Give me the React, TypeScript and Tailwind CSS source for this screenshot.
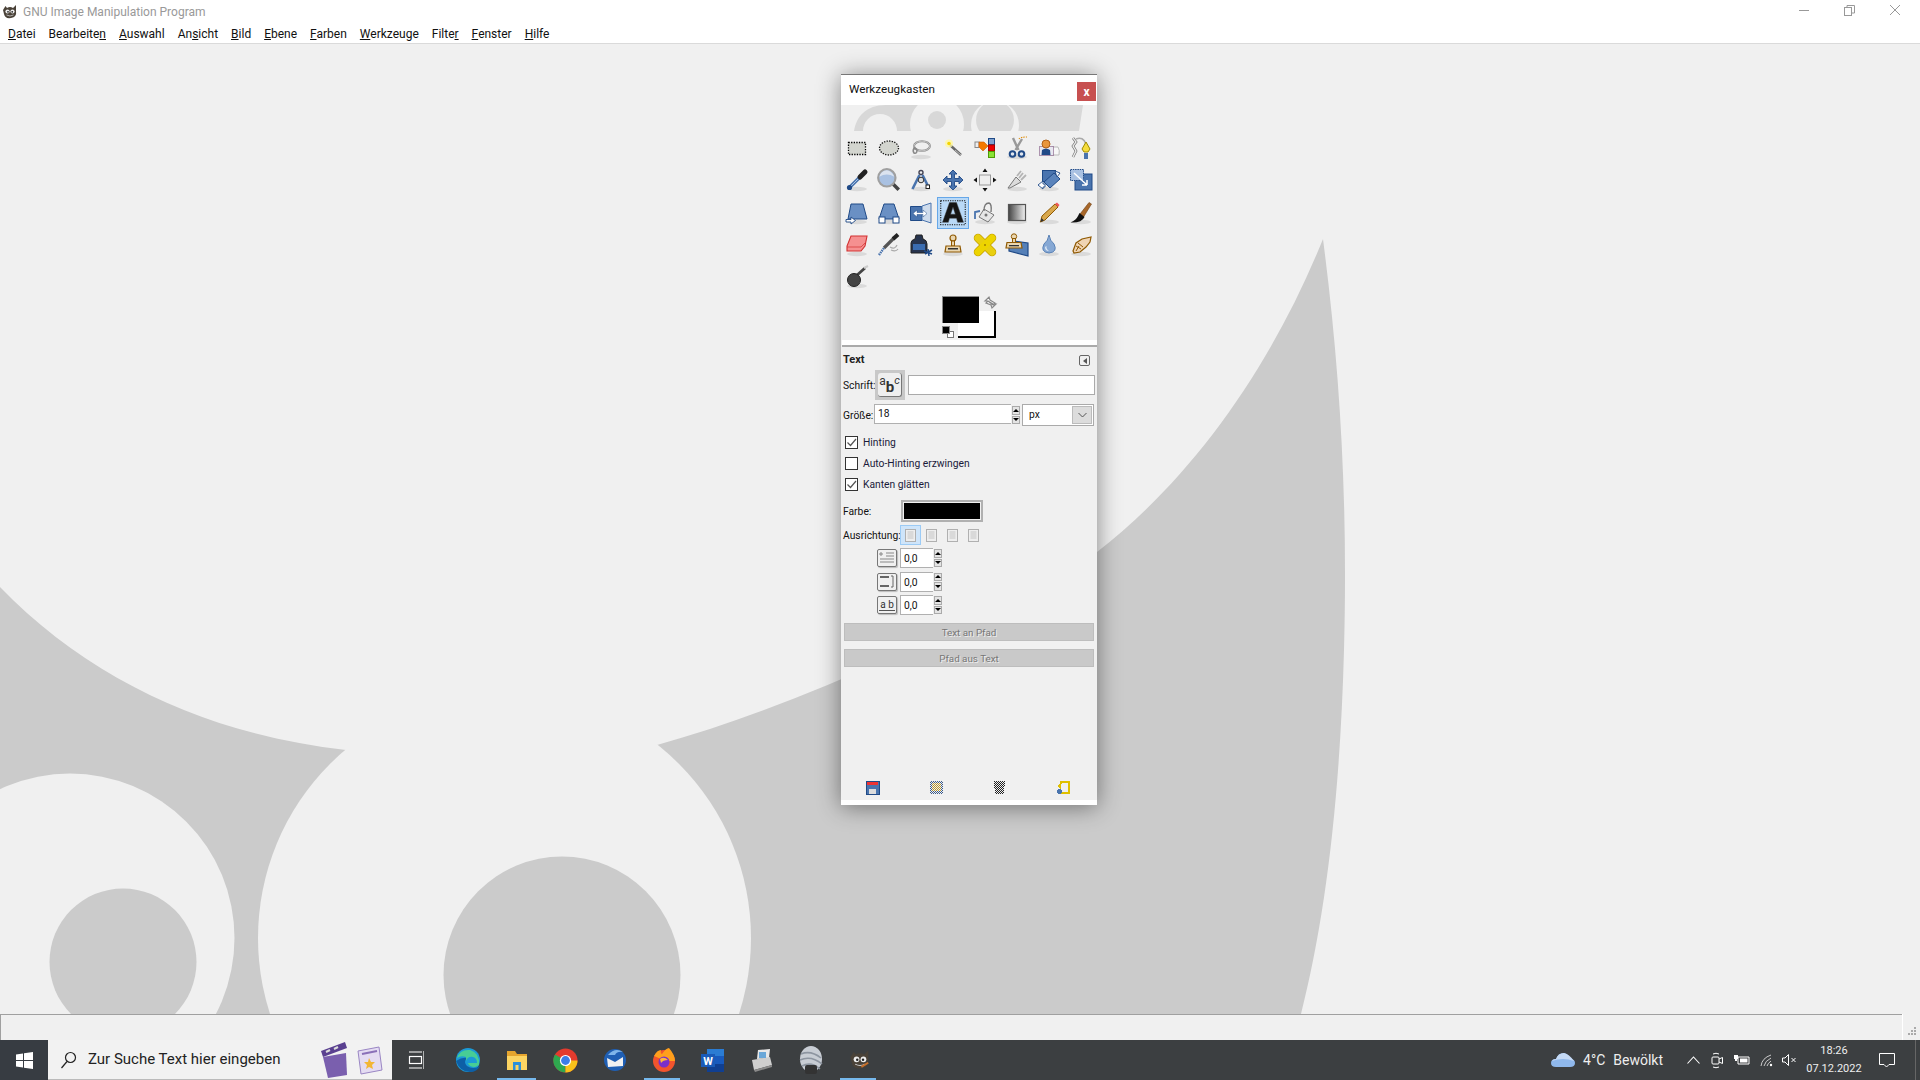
import type { ReactNode } from "react";

const menus: [string, string, string][] = [
    ["", "D", "atei"],
    ["Bearbeite", "n", ""],
    ["", "A", "uswahl"],
    ["An", "s", "icht"],
    ["", "B", "ild"],
    ["", "E", "bene"],
    ["", "F", "arben"],
    ["", "W", "erkzeuge"],
    ["Filte", "r", ""],
    ["", "F", "enster"],
    ["", "H", "ilfe"],
];

const Ico = ({ children, size = 24 }: { children: ReactNode; size?: number }) => (
    <svg width={size} height={size} viewBox="0 0 24 24" fill="none">
        {children}
    </svg>
);

const Shadow = () => <ellipse cx="12" cy="21" rx="10" ry="2.2" fill="#000" opacity="0.09" />;

const Wilber = ({ size = 16, brush }: { size?: number; brush?: boolean }) => (
    <svg width={size} height={size} viewBox="0 0 16 16">
        <path d="M1 6 L3.5 2 L5 4 Q8 2 11 4 L14 1 L14 7 Q15 13 9 14 Q3 15 2 10 Z" fill="#4a4238" />
        <circle cx="5.5" cy="7.5" r="2.1" fill="#eee" />
        <circle cx="10.5" cy="7.5" r="2.1" fill="#eee" />
        <circle cx="6" cy="7.8" r="0.9" fill="#222" />
        <circle cx="10.2" cy="7.8" r="0.9" fill="#222" />
        <path d="M4.5 11 Q8 13 11.5 11" stroke="#ccc" strokeWidth="0.8" fill="none" />
        {brush && <path d="M9 13 L14 10" stroke="#c8702a" strokeWidth="1.4" />}
    </svg>
);

const blue = "#4a74ae";
const dark = "#204a87";

const toolIcons: ReactNode[] = [
    <Ico key="rect">
        <rect x="3.5" y="6.5" width="17" height="12" fill="#d3d5cf" stroke="#000" strokeWidth="1.3" strokeDasharray="1.3 1.3" />
    </Ico>,
    <Ico key="ell">
        <ellipse cx="12" cy="12" rx="9.5" ry="7" fill="#d3d5cf" stroke="#111" strokeWidth="1.3" strokeDasharray="1.3 1.3" />
    </Ico>,
    <Ico key="lasso">
        <Shadow />
        <ellipse cx="13" cy="10" rx="8" ry="4.8" stroke="#8a8a8a" strokeWidth="2" />
        <ellipse cx="13" cy="10" rx="8" ry="4.8" stroke="#e6e6e6" strokeWidth="0.6" />
        <path d="M6 11 Q3 14 5 17 Q8 18 8 14 Q7 12 5 13" stroke="#8a8a8a" strokeWidth="1.6" />
    </Ico>,
    <Ico key="wand">
        <path d="M9 9 L20 19" stroke="#666" strokeWidth="2.4" />
        <path d="M14 14 L20 19" stroke="#bbb" strokeWidth="1" />
        <circle cx="8" cy="7.5" r="4" fill="#fff7a0" opacity="0.8" />
        <circle cx="8" cy="7.5" r="1.8" fill="#f4d400" />
    </Ico>,
    <Ico key="bycolor">
        <rect x="15.5" y="2.5" width="6" height="6" fill="#7ea1cf" stroke={dark} />
        <rect x="15.5" y="9" width="6" height="6" fill="#e00" stroke="#a00" />
        <rect x="15.5" y="15.5" width="6" height="6" fill="#8ae234" stroke="#4e9a06" />
        <rect x="2" y="6" width="4" height="5.5" fill="#eee" stroke="#888" />
        <path d="M6 6 L11 6 L15 10 L10 15 L6 11 Z" fill="#f57900" stroke="#ce5c00" strokeWidth="0.6" />
    </Ico>,
    <Ico key="scissors">
        <Shadow />
        <path d="M8 2 L13.5 14 M17 3 L10.5 14" stroke="#999" strokeWidth="2.4" />
        <circle cx="7.5" cy="18" r="2.8" stroke={dark} strokeWidth="2" fill="#dfe6ef" />
        <circle cx="16.5" cy="18" r="2.8" stroke={dark} strokeWidth="2" fill="#dfe6ef" />
        <path d="M14 3 Q15 1 22 1" stroke="#e08a00" strokeWidth="1.1" strokeDasharray="1.5 1" />
    </Ico>,
    <Ico key="fgsel">
        <path d="M15 11 L21 11 Q23 14 22 19 L12 19" stroke="#bbb" fill="#f7f7f7" />
        <rect x="2.5" y="10.5" width="14" height="9" fill="#e8e8f0" stroke="#6c3a6c" strokeDasharray="1 1" />
        <path d="M4.5 19 L5 14 Q9 11 13 14 L13.5 19 Z" fill={dark} />
        <circle cx="9" cy="8" r="4" fill="#e8963c" stroke="#b06018" />
    </Ico>,
    <Ico key="paths">
        <path d="M4 2 L7 6 L4 10 L7 15 L4 21" stroke="#777" strokeWidth="2.6" />
        <path d="M4 2 L7 6 L4 10 L7 15 L4 21" stroke="#f2f2f2" strokeWidth="1.2" />
        <path d="M7 3 Q14 0 17 8" stroke="#aaa" strokeWidth="1.6" fill="none" />
        <path d="M17 6 L21 13 L19 16 L15 16 L13 13 Z" fill="#f5dc3c" stroke="#a08c00" />
        <rect x="15" y="17" width="4" height="6" fill={blue} />
    </Ico>,
    <Ico key="picker">
        <Shadow />
        <path d="M5 19 L15 9" stroke={blue} strokeWidth="3.4" />
        <path d="M6 18 L14 10" stroke="#a8c4e6" strokeWidth="1" />
        <path d="M15 9 L20 4" stroke="#222" strokeWidth="5" strokeLinecap="round" />
        <circle cx="4.5" cy="19.5" r="2.6" fill={dark} />
    </Ico>,
    <Ico key="zoom" size={26}>
        <path d="M15.5 15.5 L21 21" stroke="#444" strokeWidth="3.2" />
        <circle cx="10" cy="10" r="8" fill="#a9c1e2" stroke="#a0a0a0" strokeWidth="2" />
        <path d="M3 9 Q10 5 17 9 Q14 3 10 3 Q5 3 3 9" fill="#dbe3ef" />
    </Ico>,
    <Ico key="measure">
        <Shadow />
        <circle cx="12" cy="4.5" r="2" stroke="#445" strokeWidth="1.4" />
        <path d="M10.5 7 L3.5 21 M13.5 7 L19 18" stroke={blue} strokeWidth="2.6" />
        <circle cx="12" cy="12" r="2.8" stroke="#333" fill="#ddd" />
        <rect x="17" y="17" width="3.5" height="3.5" fill="#fff" stroke="#222" />
    </Ico>,
    <Ico key="move">
        <Shadow />
        <path
            d="M12 2 L16 6 L13.5 6 L13.5 10.5 L18 10.5 L18 8 L22 12 L18 16 L18 13.5 L13.5 13.5 L13.5 18 L16 18 L12 22 L8 18 L10.5 18 L10.5 13.5 L6 13.5 L6 16 L2 12 L6 8 L6 10.5 L10.5 10.5 L10.5 6 L8 6 Z"
            fill={blue}
            stroke={dark}
            strokeWidth="0.9"
        />
    </Ico>,
    <Ico key="align">
        <rect x="6.5" y="7" width="11" height="10" fill="#eee" stroke="#999" />
        <path d="M12 0.5 L14.5 4 L9.5 4 Z M12 23.5 L14.5 20 L9.5 20 Z M0.5 12 L4 9.5 L4 14.5 Z M23.5 12 L20 9.5 L20 14.5 Z" fill="#111" />
    </Ico>,
    <Ico key="crop">
        <Shadow />
        <path d="M3 20 L11 9 L16 14 L5 20 Z" fill="#dcdcdc" stroke="#777" />
        <path d="M12 8 L16 3 M16 12 L21 7 M14 10 L18 5" stroke="#b4b4b4" strokeWidth="1.8" />
    </Ico>,
    <Ico key="rotate">
        <Shadow />
        <rect x="5.5" y="2.5" width="13" height="11" fill={blue} stroke={dark} />
        <path d="M7 14 L17 5 L23 11 L13 20 Z" fill="#5a83bb" stroke={dark} />
        <path d="M1 17 L6 13 L6 16 L8 16 L8 19 L6 19 L6 21 Z M18 3 L23 5 L20 9 Z" fill="#fff" stroke={dark} strokeWidth="0.9" />
    </Ico>,
    <Ico key="scale">
        <rect x="6" y="6" width="17" height="16" fill={blue} stroke={dark} />
        <rect x="1.5" y="1.5" width="13" height="11" fill="#a9c1e2" stroke={dark} strokeDasharray="1.5 0.8" />
        <path d="M5 5 L18 17 M18 17 L18 12 M18 17 L13 17" stroke="#fff" strokeWidth="1.5" />
    </Ico>,
    <Ico key="shear">
        <Shadow />
        <path d="M6 3 L18 3 L22 18 L3 18 Z" fill="#6a90c4" stroke={dark} />
        <path d="M1 18.5 L6 18.5 L6 16 L10.5 19.5 L6 23 L6 21 L1 21 Z" fill="#fff" stroke={dark} strokeWidth="0.9" />
    </Ico>,
    <Ico key="persp">
        <Shadow />
        <path d="M7 3 L17 3 L22 18 L2 18 Z" fill="#6a90c4" stroke={dark} />
        <rect x="2" y="16" width="6" height="6" fill="#fff" stroke={dark} />
        <rect x="16" y="16" width="6" height="6" fill="#fff" stroke={dark} />
    </Ico>,
    <Ico key="flip">
        <path d="M1.5 5.5 L13 5.5 L13 19.5 L1.5 19.5 Z" fill={blue} stroke={dark} />
        <path d="M13 5 L22 2 L22 22 L13 19 Z" fill="#cfdcec" stroke={blue} />
        <path d="M4 12.5 L8 9 L8 11.5 L14 11.5 L14 9 L18 12.5 L14 16 L14 13.5 L8 13.5 L8 16 Z" fill="#fff" stroke={dark} strokeWidth="0.5" />
    </Ico>,
    <Ico key="text" size={28}>
        <rect x="1.5" y="1.5" width="21" height="20.5" fill="none" stroke="#111" strokeDasharray="1 1" strokeWidth="0.9" />
        <path d="M9 3 L15 3 L21 20 L16 20 L15 16.5 L9 16.5 L8 20 L3 20 Z M10 13 L14 13 L12 7 Z" fill="#151515" stroke="#444" strokeWidth="0.4" fillRule="evenodd" />
    </Ico>,
    <Ico key="bucket">
        <Shadow />
        <path d="M11 8 L21 14 L15 21 L6 16 Z" fill="#e6e6e6" stroke="#777" />
        <path d="M11 10 Q11 2 16 2 Q19 3 18 11" stroke="#777" strokeWidth="1.4" />
        <circle cx="13" cy="14" r="1.5" fill="#777" />
        <path d="M7 10 L2 11 L2 18" stroke={blue} strokeWidth="1.8" />
    </Ico>,
    <Ico key="grad">
        <defs>
            <linearGradient id="gr" x1="0" x2="1" y1="0" y2="0">
                <stop offset="0" stopColor="#444" />
                <stop offset="1" stopColor="#f2f2f2" />
            </linearGradient>
        </defs>
        <Shadow />
        <rect x="3.5" y="3.5" width="17" height="16" fill="url(#gr)" stroke="#555" strokeWidth="1.2" />
    </Ico>,
    <Ico key="pencil">
        <Shadow />
        <path d="M3.5 21 L5 15 L18 3 L21 6 L8 19 Z" fill="#d9a84c" stroke="#8f5902" />
        <path d="M3.5 21 L4.5 17 L7 19.5 Z" fill="#333" />
        <path d="M18 3 L21 6 L22.5 4 L20 1.5 Z" fill="#ef5959" />
    </Ico>,
    <Ico key="brush">
        <Shadow />
        <path d="M11 13 L20 1.5 L22.5 3 L14.5 16 Z" fill="#a8672a" stroke="#704010" strokeWidth="0.6" />
        <path d="M10.5 12 L15.5 16 Q13 22 1.5 21.5 Q7 19 9 15 Z" fill="#111" />
    </Ico>,
    <Ico key="eraser">
        <Shadow />
        <path d="M6 3 L22 3 L20 13 L16 18 L2 18 L2 13 Z" fill="#f59090" stroke="#d13030" strokeWidth="1.1" />
        <path d="M2 14 L16 14 L20 10" stroke="#d13030" strokeWidth="0.7" />
    </Ico>,
    <Ico key="air">
        <path d="M7 15 L17 5" stroke="#555" strokeWidth="3.2" />
        <path d="M16 6 L21 1.5" stroke="#222" strokeWidth="4" />
        <path d="M13 14 Q18 17 20 12 M14 17 Q19 19 21 16" stroke="#aaa" strokeWidth="1.2" />
        <path d="M2 22 L7 15" stroke={blue} strokeWidth="2.4" strokeDasharray="1.5 0.8" />
    </Ico>,
    <Ico key="ink">
        <path d="M2 10 Q2 7 6 6 L7 2 L13 2 L14 6 Q18 7 18 11 L18 20 L2 20 Z" fill="#27344e" stroke="#222" />
        <rect x="4" y="11" width="12" height="6" fill="#3a6cb0" />
        <path d="M16 21 L23 17 M19 16 L20 23 M15 18 L23 21" stroke={dark} strokeWidth="1.5" />
    </Ico>,
    <Ico key="clone">
        <Shadow />
        <circle cx="12" cy="5" r="3" fill="#e9d6b0" stroke="#8f5902" strokeWidth="1.2" />
        <rect x="10.5" y="8" width="3" height="5" fill="#e9d6b0" stroke="#8f5902" />
        <path d="M5 13 L19 13 L20 19 L4 19 Z" fill="#e9d6b0" stroke="#8f5902" strokeWidth="1.2" />
        <rect x="7" y="15" width="10" height="1.5" fill="#333" />
    </Ico>,
    <Ico key="heal">
        <path d="M5 5 L19 19" stroke="#c4a000" strokeWidth="8.5" strokeLinecap="round" />
        <path d="M19 5 L5 19" stroke="#c4a000" strokeWidth="8.5" strokeLinecap="round" />
        <path d="M5 5 L19 19" stroke="#e9cf10" strokeWidth="7" strokeLinecap="round" />
        <path d="M19 5 L5 19" stroke="#edd400" strokeWidth="7" strokeLinecap="round" />
        <circle cx="12" cy="12" r="1" fill="#a08000" />
    </Ico>,
    <Ico key="pclone">
        <path d="M9 8 L23 10 L23 23 L4 18 L4 11" fill="#5580b8" stroke={dark} strokeWidth="1.2" />
        <circle cx="9" cy="3.5" r="2.7" fill="#e9d6b0" stroke="#8f5902" />
        <rect x="7.5" y="5.5" width="3" height="4" fill="#e9d6b0" stroke="#8f5902" />
        <path d="M2 9.5 L16 9.5 L17 15 L1 15 Z" fill="#e9d6b0" stroke="#8f5902" strokeWidth="1.2" />
        <rect x="4" y="12" width="10" height="1.3" fill="#333" />
    </Ico>,
    <Ico key="blur">
        <Shadow />
        <path d="M12 2 Q13 8 17 11 Q21 19 12 20 Q3 19 7 11 Q11 8 12 2 Z" fill="#86a8d4" stroke="#5a82b6" />
        <path d="M8 14 Q8 18 12 18 Q9 16 9.5 13 Z" fill="#dce8f5" />
    </Ico>,
    <Ico key="smudge">
        <Shadow />
        <path d="M4 18 L7 10 L13 6 L22 4 L21 9 L17 14 L11 19 L5 20 Z" fill="#efd4b4" stroke="#8f5902" strokeWidth="1.2" />
        <path d="M9 10 L14 14 M7 13 L12 16 M7 18 L10 13" stroke="#8f5902" />
    </Ico>,
    <Ico key="dodge">
        <Shadow />
        <path d="M11 11 L20 3" stroke="#444" strokeWidth="2.8" />
        <path d="M19 3 L23 1" stroke="#ccc" strokeWidth="2" />
        <circle cx="9" cy="15" r="6.5" fill="#444" stroke="#222" />
    </Ico>,
];

const Check = ({ on, label }: { on: boolean; label: string }) => (
    <div className="h-[21px] flex items-center pl-[2px]">
        <div className="w-[13px] h-[13px] border border-[#333] bg-white flex items-center justify-center">
            {on && (
                <svg width="11" height="11" viewBox="0 0 11 11" fill="none">
                    <path d="M1.5 5.5 L4.5 8.5 L10 2" stroke="#555" strokeWidth="1.2" />
                </svg>
            )}
        </div>
        <span className="ml-[5px] text-[#1a1a3a]">{label}</span>
    </div>
);

const Spin = () => (
    <div className="w-[8px] h-[18px] flex flex-col justify-between ml-px">
        <div className="h-[8.5px] bg-[#e4e4e4] border border-[#aaa] flex items-center justify-center">
            <div className="w-0 h-0 border-x-[3px] border-x-transparent border-b-[3px] border-b-black" />
        </div>
        <div className="h-[8.5px] bg-[#e4e4e4] border border-[#aaa] flex items-center justify-center">
            <div className="w-0 h-0 border-x-[3px] border-x-transparent border-t-[3px] border-t-black" />
        </div>
    </div>
);

const AlignIcon = () => (
    <svg width="11" height="13" viewBox="0 0 11 13" fill="none">
        <rect x="0.5" y="0.5" width="10" height="12" fill="#eee" stroke="#b0b0b0" />
        <path d="M2.5 3 H8.5 M2.5 5 H8.5 M2.5 7 H8.5 M2.5 9 H8.5" stroke="#c4c4c4" />
    </svg>
);

const spinIcons: ReactNode[] = [
    <svg key="a" width="18" height="16" viewBox="0 0 18 16" fill="none">
        <path d="M1 4 H5 M3 2 V6 M8 3 H16 M8 6 H16 M2 9 H16 M2 12 H16" stroke="#888" />
    </svg>,
    <svg key="b" width="18" height="16" viewBox="0 0 18 16" fill="none">
        <path d="M2 3 H11 M2 12 H11" stroke="#666" strokeWidth="2" />
        <path d="M13 2 H15 V13 H13" stroke="#666" />
    </svg>,
];

const SpinRow = ({ idx }: { idx: number }) => (
    <div className="h-[20px] flex items-center pl-[34px]">
        <div className="w-[20px] h-[18px] border border-[#777] rounded-[2px] bg-[#f0f0f0] shadow-[1px_1px_1px_#bbb] flex items-center justify-center text-[10px] text-[#333]">
            {idx < 2 ? (
                spinIcons[idx]
            ) : (
                <span className="leading-none border-b border-[#555] px-px">a b</span>
            )}
        </div>
        <div className="ml-[3px] w-[33px] h-[20px] bg-white border-t border-l border-b border-[#b0b0b0] pl-[3px] pt-[2px] flex items-center">
            0,0
        </div>
        <Spin />
    </div>
);

const DockIcon = ({ kind }: { kind: string }) => (
    <svg width="15" height="15" viewBox="0 0 15 15" shapeRendering="crispEdges">
        <defs>
            <pattern id={"ck" + kind} width="2" height="2" patternUnits="userSpaceOnUse">
                <rect width="1" height="1" fill="#f0f0f0" />
                <rect x="1" y="1" width="1" height="1" fill="#f0f0f0" />
            </pattern>
        </defs>
        {kind === "save" && (
            <g>
                <rect x="1" y="1" width="13" height="13" fill={blue} stroke={dark} />
                <rect x="2" y="2" width="11" height="3" fill="#e33" />
                <rect x="4" y="9" width="7" height="5" fill="#ddd" />
            </g>
        )}
        {kind === "restore" && (
            <g>
                <rect x="1" y="1" width="13" height="13" fill="#3a5a8a" />
                <rect x="3" y="3" width="9" height="8" fill="#b8942a" />
                <rect x="1" y="1" width="13" height="13" fill={"url(#ck" + kind + ")"} />
            </g>
        )}
        {kind === "trash" && (
            <g>
                <path d="M2 1 H13 L12 14 H3 Z" fill="#222" />
                <path d="M2 1 H13 L12 14 H3 Z" fill={"url(#ck" + kind + ")"} />
            </g>
        )}
        {kind === "reset" && (
            <g>
                <path d="M5 4 V2 H13 V12.5 H5 V10" fill="none" stroke="#e0c000" strokeWidth="2" />
                <path d="M1 6 L5 3 V9 Z" fill="#e0c000" />
                <circle cx="3.5" cy="11.5" r="2.5" fill={blue} />
            </g>
        )}
    </svg>
);

const TaskApp = ({ children, active, stacked }: { children: ReactNode; active?: boolean; stacked?: boolean }) => (
    <div className="w-[49px] h-[40px] relative flex items-center justify-center">
        {children}
        {active && <div className="absolute bottom-0 left-[5px] w-[36px] h-[2px] bg-[#76b9ed]" />}
        {stacked && <div className="absolute bottom-0 left-[41px] w-[3px] h-[2px] bg-[#76b9ed]" />}
    </div>
);

export default function App() {
    return (
        <div className="w-[1920px] h-[1080px] flex flex-col overflow-hidden bg-[#f0f0f0] font-['Roboto',sans-serif] text-[12px] text-[#111]">
            <div className="h-[44px] bg-white border-b border-[#dadada] flex flex-col shrink-0">
                <div className="h-[24px] flex items-center relative">
                    <div className="ml-[2px]">
                        <Wilber />
                    </div>
                    <span className="ml-[5px] text-[12px] text-[#999]">GNU Image Manipulation Program</span>
                    <div className="ml-auto flex items-center h-[20px] self-start">
                        <svg width="121" height="20" viewBox="0 0 121 20" fill="none" stroke="#999">
                            <path d="M0 10.5 H10" />
                            <rect x="45.5" y="7.5" width="7" height="8" />
                            <path d="M48 7 V5.5 H55.5 V13 H53" />
                            <path d="M91 5 L101 15 M101 5 L91 15" />
                        </svg>
                    </div>
                </div>
                <div className="h-[19px] flex items-center pl-[8px] gap-[13px]">
                    {menus.map((m, i) => (
                        <span key={i}>
                            {m[0]}
                            <u>{m[1]}</u>
                            {m[2]}
                        </span>
                    ))}
                </div>
            </div>

            <div className="relative flex-1">
                <svg className="absolute inset-0" width="1920" height="970" viewBox="0 44 1920 970">
                    <path
                        d="M0 587 C90 680 210 735 346 750 L657 745 C800 705 960 630 1097 552 C1190 480 1270 370 1323 239 C1340 370 1348 500 1344 650 C1340 800 1325 920 1301 1014 L0 1014 Z"
                        fill="#cbcbcb"
                    />
                    <circle cx="504.5" cy="938" r="246.5" fill="#f0f0f0" />
                    <circle cx="70" cy="938" r="164.5" fill="#f0f0f0" />
                    <circle cx="123" cy="962" r="73.5" fill="#cbcbcb" />
                    <circle cx="562" cy="975" r="118.5" fill="#cbcbcb" />
                </svg>

                <div className="absolute left-[841px] top-[30px] w-[256px] h-[731px] flex flex-col bg-[#f0f0f0] shadow-[0_2px_22px_rgba(0,0,0,0.45)] text-[10.3px]">
                    <div className="h-[31px] shrink-0 bg-white border-t border-[#777] flex items-center pl-[8px] relative">
                        <span className="text-[11.7px] text-[#111]">Werkzeugkasten</span>
                        <div className="absolute left-[236px] top-[7px] w-[19px] h-[19px] bg-[#c75050] text-white flex items-center justify-center text-[12px] font-bold">
                            x
                        </div>
                    </div>

                    <svg className="shrink-0" width="256" height="26" viewBox="0 0 256 26">
                        <path d="M13 26 C15 12 25 0 45 0 L242 0 L238 26 Z" fill="#d8d8d8" />
                        <circle cx="39" cy="26" r="17" fill="#f0f0f0" />
                        <circle cx="96" cy="19" r="27" fill="#f0f0f0" />
                        <circle cx="96" cy="15" r="9" fill="#d8d8d8" />
                        <circle cx="154" cy="20" r="24" fill="#f0f0f0" />
                        <circle cx="154" cy="15" r="19" fill="#d8d8d8" />
                    </svg>

                    <div className="mt-px grid grid-cols-[repeat(8,32px)] auto-rows-[32.25px] shrink-0">
                        {toolIcons.map((ic, i) => (
                            <div
                                key={i}
                                className={
                                    i === 19
                                        ? "flex items-center justify-center bg-[#b9d9f7] border border-[#66a7e8]"
                                        : "flex items-center justify-center"
                                }
                            >
                                {ic}
                            </div>
                        ))}
                    </div>

                    <div className="h-[46.75px] shrink-0 relative">
                        <div className="absolute left-[117px] top-[18px] w-[38px] h-[27px] bg-white border-r-2 border-b-2 border-black" />
                        <div className="absolute left-[101px] top-[3px] w-[37px] h-[27px] bg-black border-t border-l border-[#888]" />
                        <svg className="absolute left-[142px] top-[2px]" width="15" height="15" viewBox="0 0 15 15" fill="#fff" stroke="#888" strokeWidth="1.2">
                            <path d="M2 6 L6 2 L7 5 L12 8 L10 10 L5 6 Z M13 9 L9 13 L8 10 L3 8 L5 6 L10 9 Z" />
                        </svg>
                        <div className="absolute left-[106px] top-[38px] w-[7px] h-[7px] bg-white border border-[#777]" />
                        <div className="absolute left-[101px] top-[33px] w-[8px] h-[8px] bg-black border border-[#888]" />
                    </div>

                    <div className="h-[7px] shrink-0 bg-white border-b-2 border-[#aaa] ml-px" />

                    <div className="flex flex-col flex-1 pl-[2px]">
                        <div className="h-[23px] pt-[4px] flex items-center font-bold text-[11px] text-[#222]">
                            Text
                            <div className="ml-auto mr-[7px] w-[11px] h-[11px] border border-[#666] rounded-[2px] flex items-center justify-center">
                                <div className="w-0 h-0 border-y-[3px] border-y-transparent border-r-[4px] border-r-[#555]" />
                            </div>
                        </div>

                        <div className="h-[30px] flex items-center">
                            <span className="w-[32px] pt-[2px]">Schrift:</span>
                            <div className="w-[30px] h-[30px] bg-[#c8c8c8] p-[3px]">
                                <div className="w-full h-full bg-[#efefef] rounded-[3px] border-b border-r border-[#777] flex items-center justify-center text-[#333] leading-none">
                                    <span className="text-[12px] -mt-[7px]">a</span>
                                    <span className="text-[15px] font-bold mt-[6px]">b</span>
                                    <span className="text-[11px] italic -mt-[8px]">c</span>
                                </div>
                            </div>
                            <div className="ml-[3px] w-[187px] h-[20px] bg-white border border-[#aaa]" />
                        </div>

                        <div className="h-[22px] mt-[4px] flex items-center">
                            <span className="w-[31px] pt-[2px]">Größe:</span>
                            <div className="w-[137px] h-[20px] bg-white border-t border-l border-b border-[#b0b0b0] pl-[3px] flex items-center self-start">
                                18
                            </div>
                            <Spin />
                            <div className="ml-[2px] w-[72px] h-[22px] bg-white border border-[#aaa] flex items-center pl-[6px]">
                                px
                                <div className="ml-auto w-[20px] h-[18px] mr-px bg-[#dcdcdc] border border-[#bbb] flex items-center justify-center">
                                    <svg width="9" height="6" viewBox="0 0 9 6" fill="none" stroke="#555">
                                        <path d="M0.5 1 L4.5 5 L8.5 1" />
                                    </svg>
                                </div>
                            </div>
                        </div>

                        <div className="mt-[6px]">
                            <Check on label="Hinting" />
                            <Check on={false} label="Auto-Hinting erzwingen" />
                            <Check on label="Kanten glätten" />
                        </div>

                        <div className="mt-[5px] h-[22px] flex items-center">
                            <span className="w-[58px] pt-[2px]">Farbe:</span>
                            <div className="w-[82px] h-[22px] border-2 border-[#b0b0b0] p-px">
                                <div className="w-full h-full bg-black" />
                            </div>
                        </div>

                        <div className="mt-[3px] h-[20px] flex items-center">
                            <span className="w-[57px] pt-[2px]">Ausrichtung:</span>
                            <div className="flex">
                                {[0, 1, 2, 3].map((a) => (
                                    <div
                                        key={a}
                                        className={
                                            a === 0
                                                ? "w-[21px] h-[20px] flex items-center justify-center bg-[#cfe5fa] border border-[#9ccbf5]"
                                                : "w-[21px] h-[20px] flex items-center justify-center"
                                        }
                                    >
                                        <AlignIcon />
                                    </div>
                                ))}
                            </div>
                        </div>

                        <div className="mt-[3px] flex flex-col gap-[3.5px]">
                            <SpinRow idx={0} />
                            <SpinRow idx={1} />
                            <SpinRow idx={2} />
                        </div>

                        <div className="mt-[8px] ml-px w-[250px] h-[18px] pt-[2px] bg-[#c9c9c9] border border-[#bdbdbd] flex items-center justify-center text-[9.8px] text-[#777] [text-shadow:1px_1px_0_#eee]">
                            Text an Pfad
                        </div>
                        <div className="mt-[8px] ml-px w-[250px] h-[18px] pt-[2px] bg-[#c9c9c9] border border-[#bdbdbd] flex items-center justify-center text-[9.8px] text-[#777] [text-shadow:1px_1px_0_#eee]">
                            Pfad aus Text
                        </div>

                        <div className="mt-auto h-[26px] flex items-center pl-[22px] gap-[48.5px]">
                            <DockIcon kind="save" />
                            <DockIcon kind="restore" />
                            <DockIcon kind="trash" />
                            <DockIcon kind="reset" />
                        </div>
                    </div>
                    <div className="h-[5px] shrink-0 bg-white" />
                </div>
            </div>

            <div className="h-[26px] shrink-0 flex bg-[#f0f0f0]">
                <div className="w-[1902px] border-t border-l border-[#a0a0a0]" />
                <div className="flex-1 border-l border-white flex items-end justify-end pr-[3px] pb-[4px]">
                    <svg width="9" height="9" viewBox="0 0 9 9" fill="#aaa">
                        <rect x="6" y="0" width="2" height="2" />
                        <rect x="3" y="3" width="2" height="2" />
                        <rect x="6" y="3" width="2" height="2" />
                        <rect x="0" y="6" width="2" height="2" />
                        <rect x="3" y="6" width="2" height="2" />
                        <rect x="6" y="6" width="2" height="2" />
                    </svg>
                </div>
            </div>

            <div className="h-[40px] shrink-0 bg-[#3c3f41] flex items-center text-white">
                <div className="w-[48px] h-full flex items-center justify-center bg-[#373c42]">
                    <svg width="17" height="17" viewBox="0 0 17 17" fill="#fff">
                        <path d="M0 2.5 L7 1.5 V8 H0 Z M8 1.3 L17 0 V8 H8 Z M0 9 H7 V15.5 L0 14.5 Z M8 9 H17 V17 L8 15.7 Z" />
                    </svg>
                </div>
                <div className="w-[344px] h-full bg-[#f2f2f2] border-b border-[#bbb] flex items-center pl-[12px] text-[#222] relative">
                    <svg width="17" height="18" viewBox="0 0 17 18" fill="none" stroke="#222" strokeWidth="1.2">
                        <circle cx="10.5" cy="6.5" r="5" />
                        <path d="M7 10.5 L1.5 17" />
                    </svg>
                    <span className="ml-[11px] text-[15px]">Zur Suche Text hier eingeben</span>
                    <svg className="ml-auto mr-[9px]" width="66" height="38" viewBox="0 0 66 38">
                        <path d="M4 10 L28 1 L30 7 L6 16 Z" fill="#5a4090" />
                        <path d="M6 16 L29 12 L30 34 L11 37 Z" fill="#7a5fae" />
                        <path d="M9 11 L13 9 M17 8 L21 6" stroke="#ddd" strokeWidth="2" />
                        <path d="M41 10 L62 6 L65 29 L44 33 Z" fill="#e4dcf2" stroke="#9a86c4" />
                        <path d="M45 13 L60 10" stroke="#8a70b8" strokeWidth="2" />
                        <path d="M52 17 L54 21 L58 21 L55 24 L56 28 L52 26 L49 28 L50 24 L47 21 L51 21 Z" fill="#f2b636" />
                    </svg>
                </div>

                <div className="w-[47px] flex items-center justify-center">
                    <svg width="16" height="20" viewBox="0 0 16 20" fill="none" stroke="#fff" strokeWidth="1.2">
                        <rect x="1.5" y="6.5" width="12" height="7" />
                        <path d="M1 2 H14 M1 18 H14 M16 1 V19" />
                    </svg>
                </div>

                <div className="flex ml-[4px]">
                    <TaskApp>
                        <svg width="26" height="26" viewBox="0 0 26 26">
                            <circle cx="13" cy="13" r="12" fill="#1b9ad6" />
                            <path d="M1 14 Q5 25 15 25 Q22 25 25 19 Q18 23 12 19 Q8 15 12 11 Q7 10 1 14 Z" fill="#0d5fa6" />
                            <path d="M11 14 Q13 9 18 10 Q22 11 22 16 L13 16 Q14 20 20 20 L24 18 Q25 6 15 3 Q5 2 2 11 Q6 8 11 10 Z" fill="#4fd68a" opacity="0.85" />
                        </svg>
                    </TaskApp>
                    <TaskApp active stacked>
                        <svg width="24" height="24" viewBox="0 0 24 24">
                            <path d="M2 3 H10 L12 6 H22 V22 H2 Z" fill="#e6a52e" />
                            <rect x="2" y="8" width="20" height="14" fill="#fcd462" />
                            <path d="M8 22 V14 H16 V22 H13.5 V17 H10.5 V22 Z" fill="#2a8fdc" />
                        </svg>
                    </TaskApp>
                    <TaskApp>
                        <svg width="25" height="25" viewBox="0 0 25 25">
                            <circle cx="12.5" cy="12.5" r="12" fill="#e33b2e" />
                            <path d="M12.5 12.5 L2 6.5 A12 12 0 0 0 12.5 24.5 Z" fill="#2fa84f" />
                            <path d="M12.5 12.5 L24.5 12.5 A12 12 0 0 1 12.5 24.5 Z" fill="#f9c21a" />
                            <circle cx="12.5" cy="12.5" r="5.6" fill="#fff" />
                            <circle cx="12.5" cy="12.5" r="4.4" fill="#3b7de8" />
                        </svg>
                    </TaskApp>
                    <TaskApp>
                        <svg width="24" height="26" viewBox="0 0 24 26">
                            <circle cx="12" cy="13" r="11" fill="#1f5fb4" />
                            <path d="M5 8 Q12 0 20 5 Q14 4 12 8 Z" fill="#7fb5ea" />
                            <path d="M4 11 L12 15 L20 10 L20 19 L5 20 Z" fill="#f2f2f2" />
                        </svg>
                    </TaskApp>
                    <TaskApp active>
                        <svg width="24" height="26" viewBox="0 0 24 26">
                            <circle cx="12" cy="14" r="11" fill="#f2542d" />
                            <path d="M2 9 Q5 3 9 3 Q8 6 10 7 Q14 1 17 1 Q23 8 23 14 L14 14 Z" fill="#ff9f1c" />
                            <circle cx="12" cy="15" r="5.5" fill="#7a2fc9" />
                            <path d="M8 12 Q12 9 16 13 Q11 13 9 16 Z" fill="#ffb53c" />
                        </svg>
                    </TaskApp>
                    <TaskApp>
                        <svg width="25" height="25" viewBox="0 0 25 25">
                            <rect x="7" y="1" width="17" height="23" fill="#2b7cd3" />
                            <rect x="7" y="8" width="17" height="8" fill="#185abd" />
                            <rect x="7" y="16" width="17" height="8" fill="#103f91" />
                            <rect x="1" y="6" width="14" height="13" fill="#1a5bb8" />
                            <text x="8" y="16.5" textAnchor="middle" fontSize="11" fontWeight="700" fill="#fff" fontFamily="Roboto">
                                W
                            </text>
                        </svg>
                    </TaskApp>
                    <TaskApp>
                        <svg width="24" height="24" viewBox="0 0 24 24">
                            <path d="M8 2 L20 1 L19 10 L7 11 Z" fill="#e8e8e8" />
                            <path d="M2 12 L20 9 L22 17 L4 22 Z" fill="#cfcfcf" />
                            <rect x="9" y="4" width="7" height="6" fill="#6aa7d8" />
                            <path d="M4 22 L22 17 L22 19 L5 24 Z" fill="#8a8a8a" />
                        </svg>
                    </TaskApp>
                    <TaskApp>
                        <svg width="24" height="28" viewBox="0 0 24 28">
                            <ellipse cx="12" cy="13" rx="11" ry="13" fill="#c8cdd4" />
                            <path d="M2 8 Q12 4 22 12 M1 14 Q12 9 23 18 M3 20 Q12 15 21 23" stroke="#8d95a0" strokeWidth="1.6" fill="none" />
                            <rect x="6" y="19" width="12" height="9" rx="2" fill="#333" />
                        </svg>
                    </TaskApp>
                    <TaskApp active>
                        <Wilber size={22} brush />
                    </TaskApp>
                </div>

                <div className="ml-auto flex items-center h-full">
                    <svg width="24" height="16" viewBox="0 0 24 16">
                        <path d="M5 15 Q0 15 0 11 Q0 7 5 7 Q7 1 13 1 Q18 2 19 7 Q24 7 24 11 Q24 15 19 15 Z" fill="#8fb8ec" />
                        <path d="M1 9 Q12 5 23 9 Q18 2 13 1 Q7 1 5 7 Q2 7 1 9 Z" fill="#c5daf6" />
                    </svg>
                    <span className="ml-[8px] text-[14px] text-[#eee]">4°C</span>
                    <span className="ml-[8px] text-[14px] text-[#eee]">Bewölkt</span>

                    <svg className="ml-[24px]" width="13" height="8" viewBox="0 0 13 8" fill="none" stroke="#fff" strokeWidth="1.1">
                        <path d="M0.5 7.5 L6.5 1 L12.5 7.5" />
                    </svg>
                    <svg className="ml-[11px]" width="12" height="17" viewBox="0 0 12 17" fill="none" stroke="#fff">
                        <rect x="1" y="5" width="7" height="7" rx="1" />
                        <path d="M8 7 L11.5 5.5 V11.5 L8 10 M2 2 Q5 0.5 8 2 M2 15 Q5 16.5 8 15" />
                    </svg>
                    <svg className="ml-[11px]" width="16" height="12" viewBox="0 0 16 12" fill="#fff">
                        <path d="M4 3 H15 V10 H4 Z" fill="none" stroke="#fff" />
                        <rect x="6" y="4.5" width="7.5" height="4" />
                        <path d="M0 1 H4 V5 H3 V7 H1 V5 H0 Z" />
                    </svg>
                    <svg className="ml-[10px]" width="14" height="13" viewBox="0 0 14 13" fill="none" stroke="#ccc">
                        <path d="M1 12 Q2 4 11 1 M4 12 Q5 7 11 4 M7 12 Q8 9 11 7" />
                        <circle cx="11" cy="11" r="1.2" fill="#fff" stroke="none" />
                    </svg>
                    <svg className="ml-[8px]" width="15" height="12" viewBox="0 0 15 12" fill="none" stroke="#fff">
                        <path d="M0.5 4 H3 L6.5 0.5 V11.5 L3 8 H0.5 Z M9.5 4 L13.5 8 M13.5 4 L9.5 8" />
                    </svg>

                    <div className="ml-[6px] w-[62px] flex flex-col items-center text-[11px] text-[#eee] leading-[18px]">
                        <span>18:26</span>
                        <span>07.12.2022</span>
                    </div>

                    <svg className="ml-[14px]" width="16" height="15" viewBox="0 0 16 15" fill="none" stroke="#fff">
                        <path d="M0.5 0.5 H15.5 V11.5 H10 L7.5 14 L5 11.5 H0.5 Z" />
                    </svg>
                    <div className="ml-[20px] w-px h-full bg-[#666]" />
                    <div className="w-[4px]" />
                </div>
            </div>
        </div>
    );
}
